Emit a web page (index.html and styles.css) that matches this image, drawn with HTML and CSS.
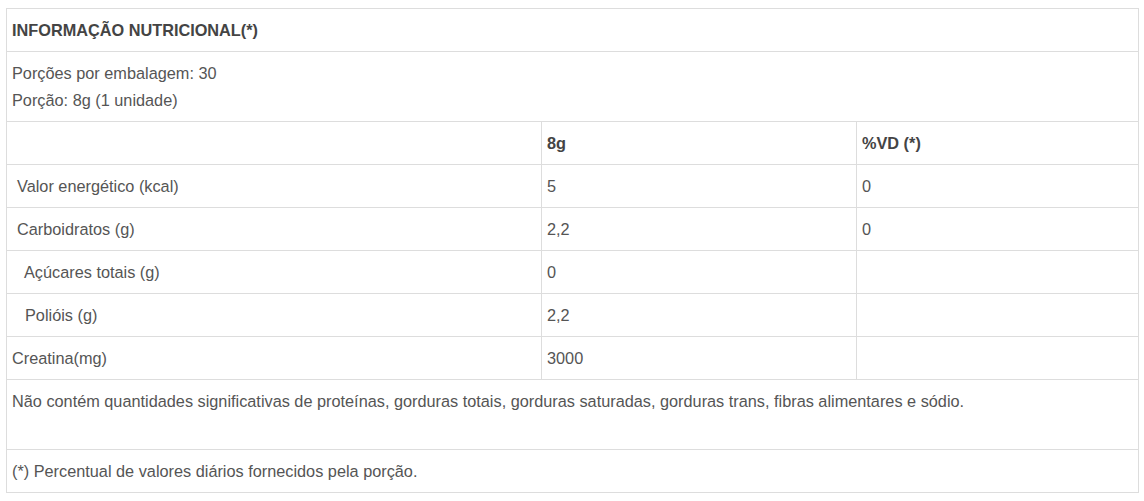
FILE: index.html
```html
<!DOCTYPE html>
<html lang="pt-BR">
<head>
<meta charset="utf-8">
<link rel="stylesheet" href="styles.css">
</head>
<body>
<table class="nutri">
  <colgroup>
    <col class="c1"><col class="c2"><col class="c3">
  </colgroup>
  <tr><td colspan="3" class="title">INFORMAÇÃO NUTRICIONAL(*)</td></tr>
  <tr><td colspan="3">Porções por embalagem: 30<br>Porção: 8g (1 unidade)</td></tr>
  <tr><td></td><td class="bold">8g</td><td class="bold">%VD (*)</td></tr>
  <tr><td><span class="ind1">Valor energético (kcal)</span></td><td>5</td><td>0</td></tr>
  <tr><td><span class="ind1">Carboidratos (g)</span></td><td>2,2</td><td>0</td></tr>
  <tr><td><span class="ind2">Açúcares totais (g)</span></td><td>0</td><td></td></tr>
  <tr><td><span class="ind3">Polióis (g)</span></td><td>2,2</td><td></td></tr>
  <tr><td>Creatina(mg)</td><td>3000</td><td></td></tr>
  <tr><td colspan="3" class="tall">Não contém quantidades significativas de proteínas, gorduras totais, gorduras saturadas, gorduras trans, fibras alimentares e sódio.</td></tr>
  <tr><td colspan="3">(*) Percentual de valores diários fornecidos pela porção.</td></tr>
</table>
</body>
</html>
```
FILE: styles.css
```css
html, body {
  margin: 0;
  padding: 0;
  background: #fff;
}
body {
  padding: 8px 6px;
  font-family: "Liberation Sans", Arial, sans-serif;
  font-size: 16.3px;
  color: #555;
}
.nutri {
  width: 1132px;
  border-collapse: collapse;
  table-layout: fixed;
}
.c1 { width: 535px; }
.c2 { width: 315px; }
.c3 { width: 282px; }
.nutri td {
  border: 1px solid #ddd;
  padding: 8px 5px 7px;
  line-height: 27px;
  height: 27px;
  vertical-align: top;
  text-align: left;
}
.nutri td.title, .nutri td.bold {
  font-weight: bold;
  color: #444;
}
.nutri td.tall {
  height: 54px;
}
.ind1 { padding-left: 5px; }
.ind2 { padding-left: 12px; }
.ind3 { padding-left: 13px; }
```
